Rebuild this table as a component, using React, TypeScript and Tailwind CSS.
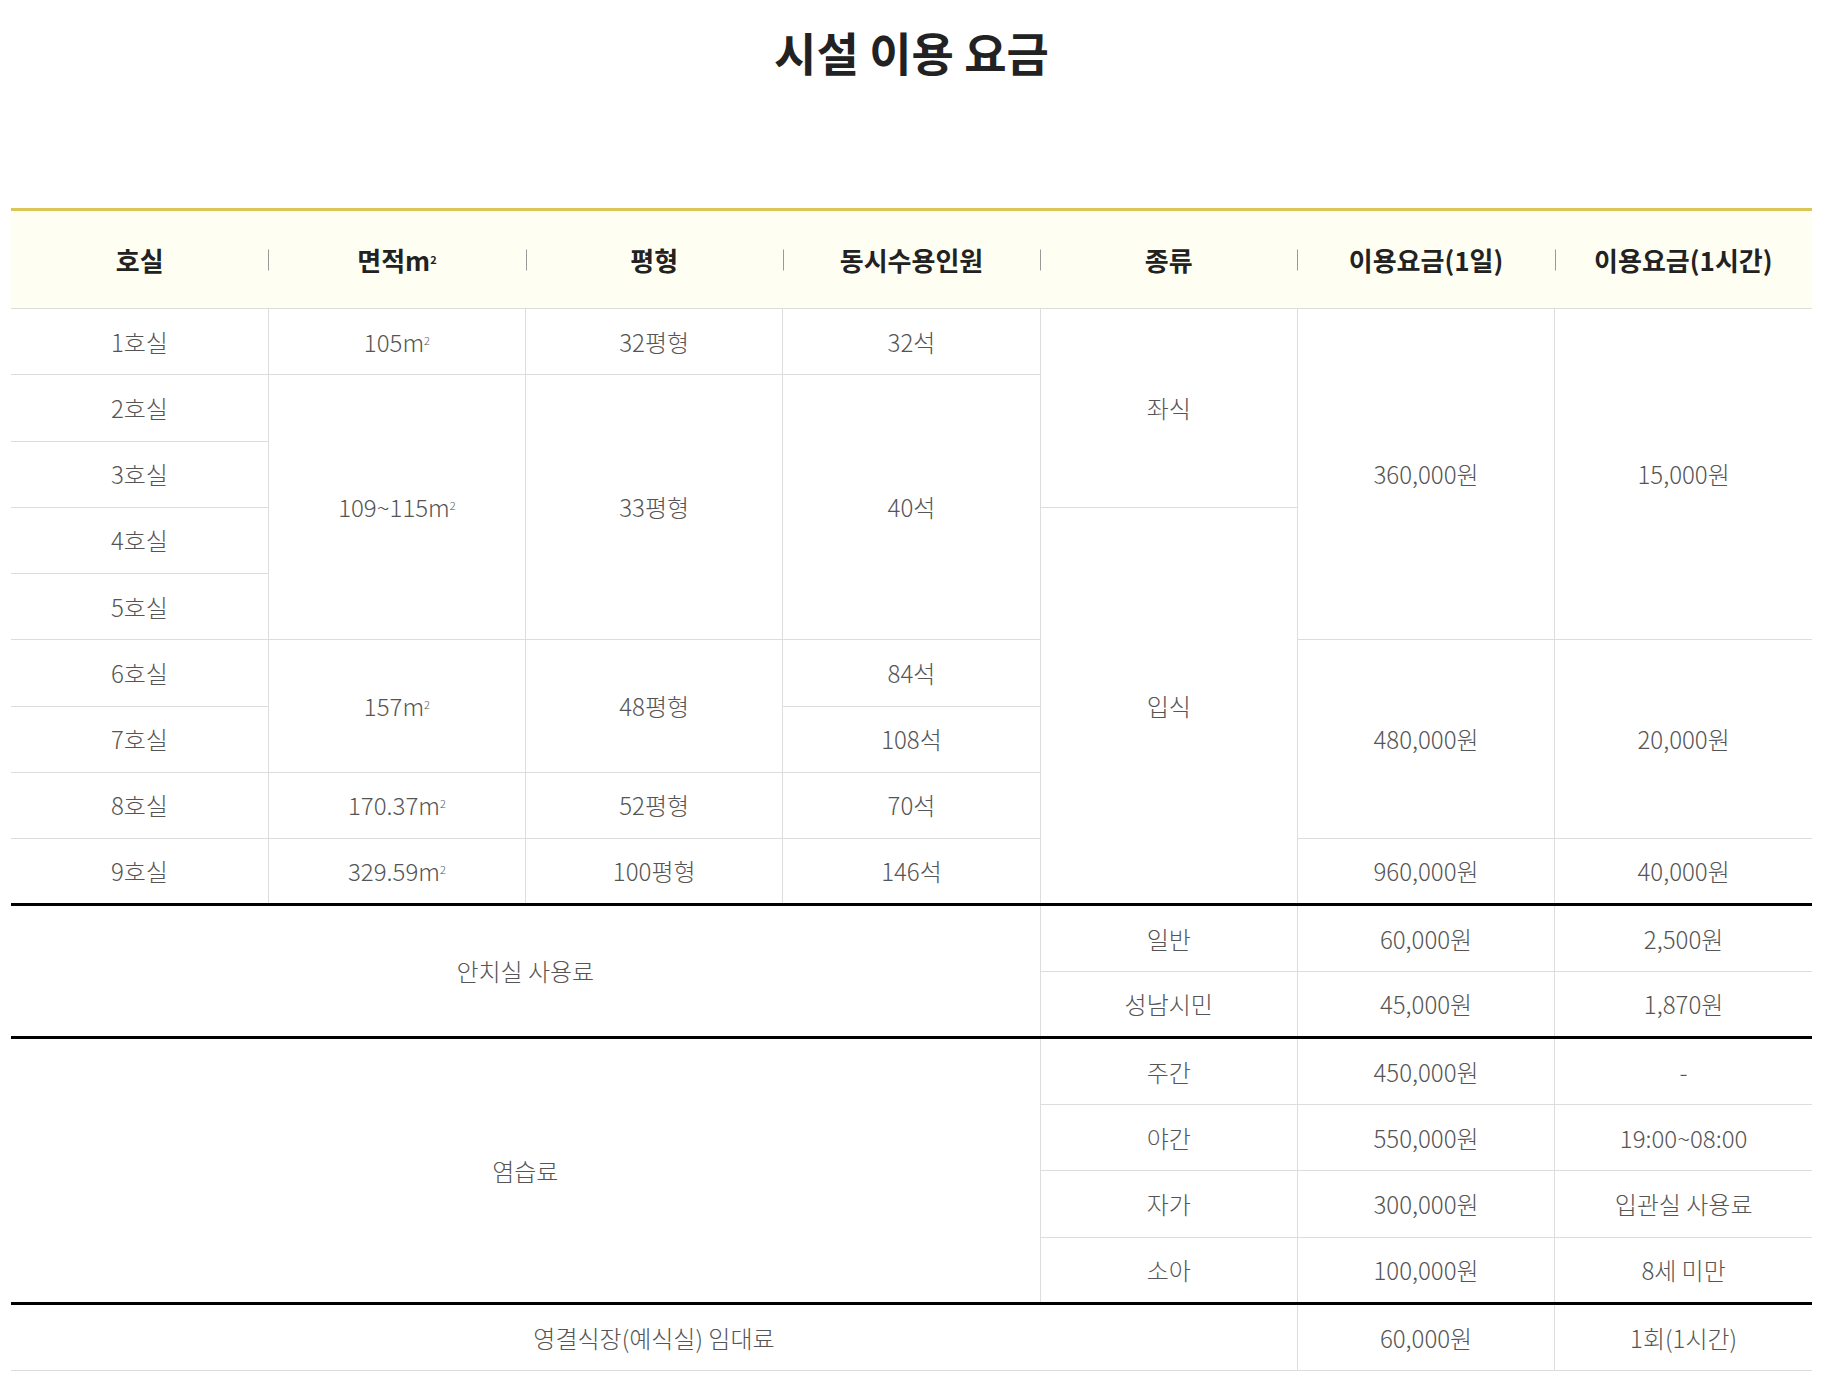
import React from "react";

const font = { fontFamily: '"Noto Sans CJK KR", "Noto Sans", sans-serif' };

const base = "border border-[#dddddd] text-center align-middle font-light text-[24px] text-[#555555] p-0";
const td = base + " h-[66.25px]";
const tdb = base + " h-[66.5px]";
const first = " border-l-0";
const last = " border-r-0";
const thick = " border-t-[3px] border-t-black";

const Sq = () => <sup className="text-[11px] relative -top-[7px] align-baseline">2</sup>;

const th =
  "relative h-[99px] p-0 text-[26px] font-bold text-[#222222] bg-[#fffef2] border-t-[3px] border-t-[#dbc656] border-b border-b-[#dddddd] text-center align-middle";
const sep =
  " before:content-[''] before:absolute before:left-0 before:top-1/2 before:-translate-y-1/2 before:h-[21px] before:w-px before:bg-[#999999]";

export default function App() {
  return (
    <div className="bg-white w-full min-h-[1383px]" style={font}>
      <h2 className="text-center text-[46px] leading-[54px] font-bold text-[#222222] pt-[24px]">시설 이용 요금</h2>
      <div className="px-[11px] mt-[130px]">
        <table className="w-full table-fixed border-collapse">
          <thead>
            <tr>
              <th className={th}>호실</th>
              <th className={th + sep}>
                면적m<Sq />
              </th>
              <th className={th + sep}>평형</th>
              <th className={th + sep}>동시수용인원</th>
              <th className={th + sep}>종류</th>
              <th className={th + sep}>이용요금(1일)</th>
              <th className={th + sep}>이용요금(1시간)</th>
            </tr>
          </thead>
          <tbody>
            <tr>
              <td className={td + first}>1호실</td>
              <td className={td}>105m<Sq /></td>
              <td className={td}>32평형</td>
              <td className={td}>32석</td>
              <td className={td} rowSpan={3}>좌식</td>
              <td className={td} rowSpan={5}>360,000원</td>
              <td className={td + last} rowSpan={5}>15,000원</td>
            </tr>
            <tr>
              <td className={td + first}>2호실</td>
              <td className={td} rowSpan={4}>109~115m<Sq /></td>
              <td className={td} rowSpan={4}>33평형</td>
              <td className={td} rowSpan={4}>40석</td>
            </tr>
            <tr>
              <td className={td + first}>3호실</td>
            </tr>
            <tr>
              <td className={td + first}>4호실</td>
              <td className={td} rowSpan={6}>입식</td>
            </tr>
            <tr>
              <td className={td + first}>5호실</td>
            </tr>
            <tr>
              <td className={td + first}>6호실</td>
              <td className={td} rowSpan={2}>157m<Sq /></td>
              <td className={td} rowSpan={2}>48평형</td>
              <td className={td}>84석</td>
              <td className={td} rowSpan={3}>480,000원</td>
              <td className={td + last} rowSpan={3}>20,000원</td>
            </tr>
            <tr>
              <td className={td + first}>7호실</td>
              <td className={td}>108석</td>
            </tr>
            <tr>
              <td className={td + first}>8호실</td>
              <td className={td}>170.37m<Sq /></td>
              <td className={td}>52평형</td>
              <td className={td}>70석</td>
            </tr>
            <tr>
              <td className={td + first}>9호실</td>
              <td className={td}>329.59m<Sq /></td>
              <td className={td}>100평형</td>
              <td className={td}>146석</td>
              <td className={td}>960,000원</td>
              <td className={td + last}>40,000원</td>
            </tr>

            <tr>
              <td className={tdb + first + thick} colSpan={4} rowSpan={2}>안치실 사용료</td>
              <td className={tdb + thick}>일반</td>
              <td className={tdb + thick}>60,000원</td>
              <td className={tdb + last + thick}>2,500원</td>
            </tr>
            <tr>
              <td className={tdb}>성남시민</td>
              <td className={tdb}>45,000원</td>
              <td className={tdb + last}>1,870원</td>
            </tr>

            <tr>
              <td className={tdb + first + thick} colSpan={4} rowSpan={4}>염습료</td>
              <td className={tdb + thick}>주간</td>
              <td className={tdb + thick}>450,000원</td>
              <td className={tdb + last + thick}>-</td>
            </tr>
            <tr>
              <td className={tdb}>야간</td>
              <td className={tdb}>550,000원</td>
              <td className={tdb + last}>19:00~08:00</td>
            </tr>
            <tr>
              <td className={tdb}>자가</td>
              <td className={tdb}>300,000원</td>
              <td className={tdb + last}>입관실 사용료</td>
            </tr>
            <tr>
              <td className={tdb}>소아</td>
              <td className={tdb}>100,000원</td>
              <td className={tdb + last}>8세 미만</td>
            </tr>

            <tr>
              <td className={tdb + first + thick} colSpan={5}>영결식장(예식실) 임대료</td>
              <td className={tdb + thick}>60,000원</td>
              <td className={tdb + last + thick}>1회(1시간)</td>
            </tr>
          </tbody>
        </table>
      </div>
    </div>
  );
}
